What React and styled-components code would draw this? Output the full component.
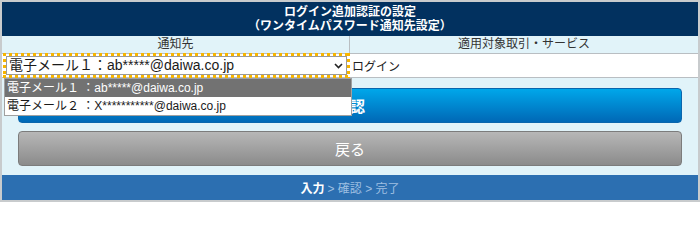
import React from "react";
import styled, { createGlobalStyle } from "styled-components";

const Global = createGlobalStyle`
  body {
    margin: 0;
    background: #ffffff;
    font-family: "Liberation Sans", "Noto Sans CJK JP", sans-serif;
  }
`;

const Frame = styled.div`
  width: 696px;
  border: 2px solid #c8cbcd;
  position: relative;
  background: #e1f3f9;
`;

const Header = styled.div`
  background: #02315f;
  color: #ffffff;
  text-align: center;
  font-size: 12px;
  font-weight: 700;
  line-height: 14px;
  padding: 3px 0;
`;

const Table = styled.div`
  display: grid;
  grid-template-columns: 348px 1fr;
`;

const HeadCell = styled.div`
  height: 17px;
  line-height: 17px;
  font-size: 12px;
  color: #333333;
  text-align: center;
  background: #e1f3f9;
  border-bottom: 1px solid #b9bec2;
  border-right: ${(p) => (p.$divider ? "1px solid #b9bec2" : "none")};
`;

const BodyCell = styled.div`
  height: 23px;
  background: #ffffff;
  border-bottom: 1px solid #b9bec2;
  display: flex;
  align-items: center;
  font-size: 12px;
  color: #222222;
  padding-left: ${(p) => (p.$pad ? "2px" : "0")};
  position: relative;
`;

const FocusRing = styled.div`
  position: relative;
  margin: -1px 0 -1px 1px;
  padding: 3px;
  width: 342px;
  height: 19px;
  &::after {
    content: "";
    position: absolute;
    inset: 0;
    pointer-events: none;
    background:
      repeating-linear-gradient(90deg, #f7b500 0 3px, transparent 3px 6px) top / 100% 3px no-repeat,
      repeating-linear-gradient(90deg, #f7b500 0 3px, transparent 3px 6px) bottom / 100% 3px no-repeat,
      repeating-linear-gradient(180deg, #f7b500 0 3px, transparent 3px 6px) left / 3px 100% no-repeat,
      repeating-linear-gradient(180deg, #f7b500 0 3px, transparent 3px 6px) right / 3px 100% no-repeat;
  }
`;

const SelectBox = styled.div`
  height: 100%;
  box-sizing: border-box;
  border: 1px solid #9a9a9a;
  background: #ffffff;
  display: flex;
  align-items: center;
  justify-content: space-between;
  padding: 0 3px 0 2px;
  font-size: 14px;
  line-height: 17px;
  color: #1a1a1a;
`;

const Options = styled.div`
  position: absolute;
  left: 2px;
  top: 24px;
  width: 346px;
  background: #ffffff;
  border: 1px solid #a0a0a0;
  z-index: 2;
`;

const Option = styled.div`
  height: 18px;
  line-height: 18px;
  font-size: 12px;
  padding-left: 2px;
  background: ${(p) => (p.$active ? "#727272" : "#ffffff")};
  color: ${(p) => (p.$active ? "#ffffff" : "#1a1a1a")};
`;

const Actions = styled.div`
  display: flex;
  flex-direction: column;
  gap: 8px;
  padding: 10px 16px 9px;
`;

const Button = styled.div`
  height: 35px;
  box-sizing: border-box;
  border-radius: 4px;
  display: flex;
  align-items: center;
  justify-content: center;
  color: #ffffff;
  font-size: 15px;
  font-weight: ${(p) => (p.$primary ? 700 : 400)};
  background: ${(p) =>
    p.$primary
      ? "linear-gradient(#00a7ea, #0068b6)"
      : "linear-gradient(#b7b7b7, #8b8b8b)"};
  border: 1px solid ${(p) => (p.$primary ? "#0a66ad" : "#7c7c7c")};
`;

const Footer = styled.div`
  height: 25px;
  background: #2c6fb1;
  display: flex;
  align-items: center;
  justify-content: center;
  font-size: 12px;
  color: #9ebfe2;
  gap: 3px;
`;

const Current = styled.span`
  color: #ffffff;
  font-weight: 700;
`;

const Chevron = () => (
  <svg width="9" height="6" viewBox="0 0 9 6">
    <path d="M1 1l3.5 3.5L8 1" fill="none" stroke="#222" strokeWidth="1.6" />
  </svg>
);

export default function App() {
  return (
    <>
      <Global />
      <Frame>
        <Header>
          <div>ログイン追加認証の設定</div>
          <div>（ワンタイムパスワード通知先設定）</div>
        </Header>
        <Table>
          <HeadCell $divider>通知先</HeadCell>
          <HeadCell>適用対象取引・サービス</HeadCell>
          <BodyCell>
            <FocusRing>
              <SelectBox>
                <span>電子メール１：ab*****@daiwa.co.jp</span>
                <Chevron />
              </SelectBox>
            </FocusRing>
            <Options>
              <Option $active>電子メール１ ：ab*****@daiwa.co.jp</Option>
              <Option>電子メール２ ：X***********@daiwa.co.jp</Option>
            </Options>
          </BodyCell>
          <BodyCell $pad>ログイン</BodyCell>
        </Table>
        <Actions>
          <Button $primary>確認</Button>
          <Button>戻る</Button>
        </Actions>
        <Footer>
          <Current>入力</Current>
          <span>&gt; 確認 &gt; 完了</span>
        </Footer>
      </Frame>
    </>
  );
}
